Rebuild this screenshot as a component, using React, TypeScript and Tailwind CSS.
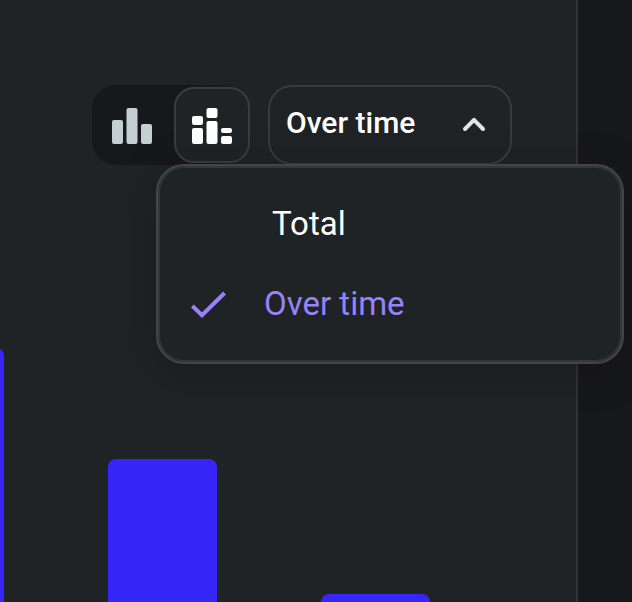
import { useState } from 'react';
import clsx from 'clsx';

const options = ['Total', 'Over time'];

const bars = [
  { id: 'first', height: 254 },
  { id: 'second', height: 143 },
  { id: 'third', height: 8 },
];

function BarsIcon() {
  return (
    <svg width="40" height="40" viewBox="0 0 40 40" fill="currentColor" aria-hidden="true">
      <rect x="0" y="15" width="11" height="24" rx="2" />
      <rect x="14.5" y="3" width="11" height="36" rx="2" />
      <rect x="29" y="19" width="11" height="20" rx="2" />
    </svg>
  );
}

function StackedBarsIcon() {
  return (
    <svg width="40" height="40" viewBox="0 0 40 40" fill="currentColor" aria-hidden="true">
      <rect x="0" y="11" width="11" height="9" rx="2" />
      <rect x="0" y="23" width="11" height="16" rx="2" />
      <rect x="14.5" y="3" width="11" height="10" rx="2" />
      <rect x="14.5" y="16" width="11" height="23" rx="2" />
      <rect x="29" y="23" width="11" height="5" rx="2" />
      <rect x="29" y="31" width="11" height="8" rx="2" />
    </svg>
  );
}

function ChevronIcon({ open }: { open: boolean }) {
  return (
    <svg
      width="24"
      height="24"
      viewBox="0 0 24 24"
      fill="none"
      stroke="#e1e4e5"
      strokeWidth="4"
      strokeLinecap="round"
      strokeLinejoin="round"
      className={clsx(!open && 'rotate-180')}
      aria-hidden="true"
    >
      <path d="M3 18L12 8.8L21 18" />
    </svg>
  );
}

function CheckIcon() {
  return (
    <svg width="48" height="48" viewBox="0 0 48 48" fill="none" stroke="currentColor" strokeWidth="4" aria-hidden="true">
      <path d="M8.4 26L18 35.2L40.6 13" />
    </svg>
  );
}

export default function App() {
  const [chart, setChart] = useState<'grouped' | 'stacked'>('stacked');
  const [open, setOpen] = useState(true);
  const [selected, setSelected] = useState('Over time');

  const toggleClass = (active: boolean) =>
    clsx(
      'flex size-[76px] items-center justify-center rounded-[20px] border-2',
      active ? 'border-[#3a3d40] bg-[#1f2326] text-white' : 'border-transparent text-[#c3cfd0]'
    );

  return (
    <div className="flex min-h-screen bg-[#1f2326] font-[Roboto,sans-serif] text-white">
      <main className="flex min-w-0 flex-1 flex-col">
        {/* Toolbar */}
        <div className="relative z-10 flex justify-end gap-4 pt-[85px] pr-16">
          <div className="flex h-20 w-40 items-center justify-between rounded-3xl bg-linear-to-r from-[#17181b] from-75% to-[#1f2326] px-0.5" role="group" aria-label="Chart type">
            <button
              type="button"
              aria-label="Bar chart"
              aria-pressed={chart === 'grouped'}
              onClick={() => setChart('grouped')}
              className={toggleClass(chart === 'grouped')}
            >
              <BarsIcon />
            </button>
            <button
              type="button"
              aria-label="Stacked bar chart"
              aria-pressed={chart === 'stacked'}
              onClick={() => setChart('stacked')}
              className={toggleClass(chart === 'stacked')}
            >
              <StackedBarsIcon />
            </button>
          </div>

          <div className="relative">
            <button
              type="button"
              aria-haspopup="listbox"
              aria-expanded={open}
              onClick={() => setOpen(!open)}
              className="flex h-20 w-[244px] items-center justify-between rounded-3xl border-2 border-[#383b3e] pr-6 pb-1 pl-4 text-[30px] leading-10 font-medium"
            >
              {selected}
              <ChevronIcon open={open} />
            </button>

            {open && (
              <div
                role="listbox"
                aria-label="Period"
                className="absolute top-full -right-28 -mt-px w-[468px] rounded-[28px] border-2 border-[#434548] bg-[#1f2326] py-[18px] shadow-[inset_0_0_0_2px_#34373a,0_8px_40px_rgba(20,14,18,0.3)]"
              >
                {options.map((option) => (
                  <button
                    key={option}
                    type="button"
                    role="option"
                    aria-selected={option === selected}
                    onClick={() => {
                      setSelected(option);
                      setOpen(false);
                    }}
                    className={clsx(
                      'flex h-20 w-full items-center gap-8 text-left text-[33px] leading-10',
                      option === selected ? 'pl-[26px] text-[#9782f8]' : 'pl-[114px]'
                    )}
                  >
                    {option === selected && <CheckIcon />}
                    {option}
                  </button>
                ))}
              </div>
            )}
          </div>
        </div>

        {/* Chart */}
        <div className="flex flex-1 items-end gap-[104px] overflow-hidden">
          {bars.map((bar) => (
            <div
              key={bar.id}
              className="w-[109px] shrink-0 rounded-t-lg bg-[#3626f7] first:-ml-[105px]"
              style={{ height: bar.height }}
            />
          ))}
        </div>
      </main>

      <aside className="w-14 shrink-0 border-l-2 border-[#303336] bg-[#17181b]" />
    </div>
  );
}
